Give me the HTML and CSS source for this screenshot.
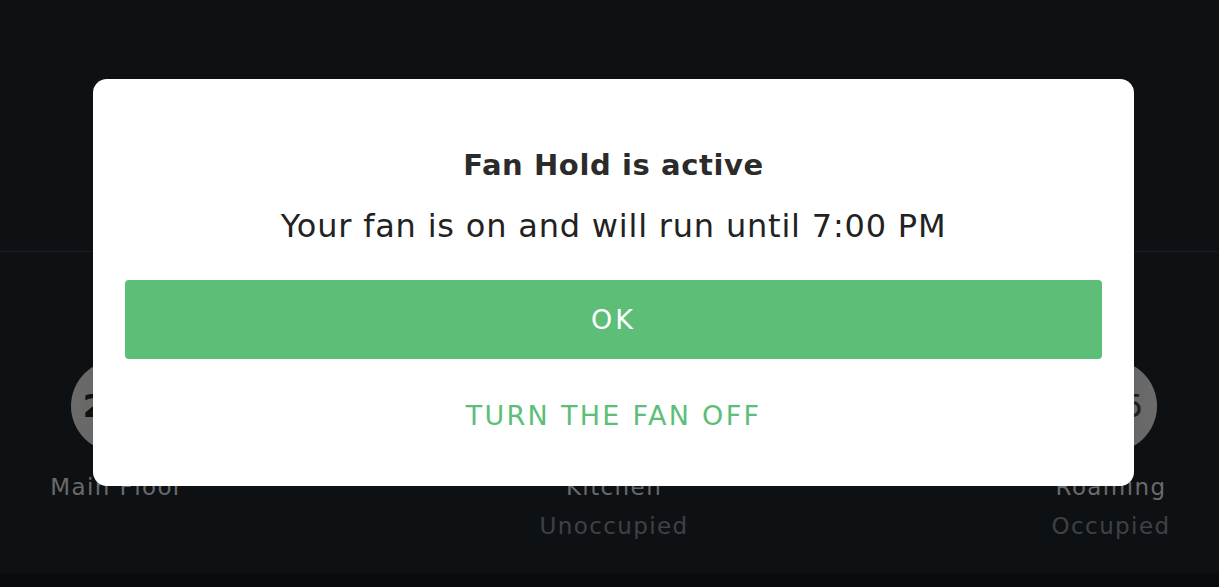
FILE: index.html
```html
<!DOCTYPE html>
<html lang="en">
<head>
  <meta charset="UTF-8" />
  <title>Fan Hold</title>
  <link rel="stylesheet" href="styles.css">
</head>
<body>
  <div class="screen">
    <div class="top-panel"></div>
    <div class="rooms">
      <div class="room">
        <div class="bubble bubble-left"><span>22</span></div>
        <div class="room-name">Main Floor</div>
        <div class="room-status"></div>
      </div>
      <div class="room">
        <div class="bubble"></div>
        <div class="room-name">Kitchen</div>
        <div class="room-status">Unoccupied</div>
      </div>
      <div class="room">
        <div class="bubble bubble-right"><span>25</span></div>
        <div class="room-name">Roaming</div>
        <div class="room-status">Occupied</div>
      </div>
    </div>
    <div class="bottom-bar"></div>
  </div>

  <div class="modal">
    <h2 class="modal-title">Fan Hold is active</h2>
    <p class="modal-text">Your fan is on and will run until 7:00 PM</p>
    <button class="btn-ok">OK</button>
    <button class="btn-link">TURN THE FAN OFF</button>
  </div>
</body>
</html>
```

FILE: styles.css
```css
body {
  margin: 0;
  padding: 0;
  background: #0e1114;
  font-family: 'DejaVu Sans', sans-serif;
  overflow: hidden;
}

.screen {
  height: 587px;
  display: flex;
  flex-direction: column;
}

.top-panel {
  height: 251px;
  border-bottom: 1px solid #1a1d21;
}

.rooms {
  flex: 1;
  display: flex;
  justify-content: space-between;
  padding: 108px 41px 0 50px;
  background: #0e1114;
}

.room {
  width: 134px;
  display: flex;
  flex-direction: column;
  align-items: center;
}

.bubble {
  width: 92px;
  height: 92px;
  border-radius: 50%;
  background: linear-gradient(90deg, #6b6b6b, #5c5c5c);
  display: flex;
  align-items: center;
  justify-content: center;
}

.bubble span {
  color: #111;
  font-size: 32px;
  line-height: 32px;
  letter-spacing: 12px;
  margin-right: -12px;
}

.bubble-left span {
  font-weight: bold;
  margin-right: 0;
}

.bubble-right {
  background: linear-gradient(90deg, #5c5c5c, #6b6b6b);
}

.bubble-right span {
  color: #1e1e1e;
  margin-right: -24px;
}

.room-name {
  margin-top: 22px;
  font-size: 23px;
  letter-spacing: 1.4px;
  color: #6a6a6a;
  white-space: nowrap;
}

.room-status {
  margin-top: 13px;
  font-size: 23px;
  letter-spacing: 1.4px;
  color: #3e4145;
  white-space: nowrap;
}

.bottom-bar {
  height: 14px;
  background: #0a0b0d;
}

.modal {
  position: fixed;
  left: 93px;
  top: 79px;
  width: 1041px;
  height: 407px;
  box-sizing: border-box;
  background: #fff;
  border-radius: 14px;
  padding: 64px 32px 0;
  text-align: center;
}

.modal-title {
  margin: 0;
  font-size: 29px;
  font-weight: bold;
  letter-spacing: 0.6px;
  color: #2b2b2b;
  line-height: 44px;
}

.modal-text {
  margin: 17px 0 0;
  font-size: 32px;
  letter-spacing: 0.8px;
  color: #222;
  line-height: 44px;
}

.btn-ok {
  display: block;
  width: 100%;
  height: 79px;
  margin-top: 32px;
  border: none;
  border-radius: 4px;
  background: #5dbe78;
  color: #fff;
  font-family: inherit;
  font-size: 27px;
  letter-spacing: 3px;
}

.btn-link {
  display: block;
  margin: 40px auto 0;
  border: none;
  background: none;
  color: #5dbe78;
  font-family: inherit;
  font-size: 27px;
  letter-spacing: 2.3px;
}
```
